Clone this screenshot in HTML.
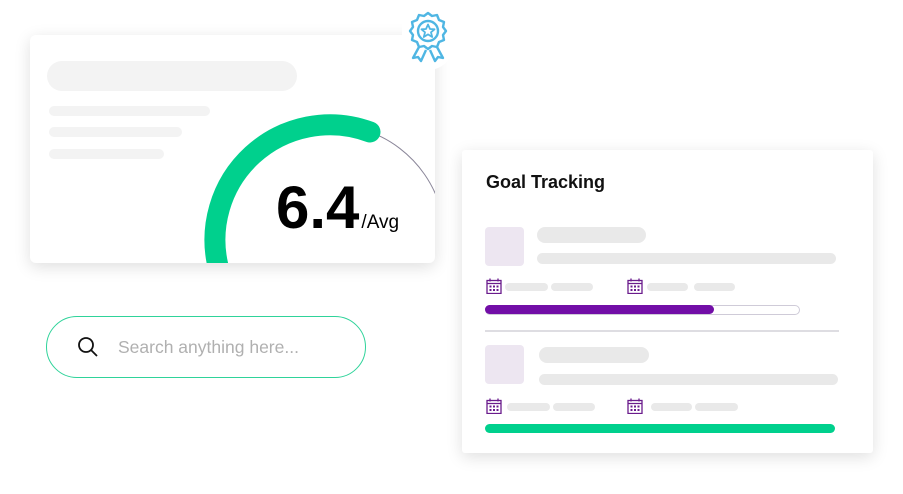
<!DOCTYPE html>
<html><head><style>
*{margin:0;padding:0;box-sizing:border-box}
body{width:903px;height:494px;background:#fff;position:relative;overflow:hidden;font-family:"Liberation Sans",sans-serif}
.a{position:absolute}
.card{background:#fff;border-radius:6px;box-shadow:0 4px 16px rgba(0,0,0,0.13)}
.sk{position:absolute;background:#e9e9e9;border-radius:8px}
.sq{position:absolute;background:#ede6f1;border-radius:4px;width:39px;height:39px}
</style></head><body>
<div class="a card" style="left:30px;top:35px;width:405px;height:228px;overflow:hidden">
  <div class="sk" style="left:17px;top:26px;width:250px;height:30px;border-radius:15px;background:#f3f3f3"></div>
  <div class="sk" style="left:19px;top:71px;width:161px;height:10px;background:#f3f3f3"></div>
  <div class="sk" style="left:19px;top:92px;width:133px;height:10px;background:#f3f3f3"></div>
  <div class="sk" style="left:19px;top:114px;width:115px;height:10px;background:#f3f3f3"></div>
  <svg class="a" style="left:-30px;top:-35px" width="480" height="300">
    <path d="M370 132 A115 115 0 0 1 445 240" fill="none" stroke="#8a8699" stroke-width="1"/>
    <path d="M219 270 A115 115 0 0 1 370 132" fill="none" stroke="#00d08d" stroke-width="21" stroke-linecap="round"/>
  </svg>
  <div class="a" style="left:246px;top:138px;font-size:60px;font-weight:bold;color:#000;white-space:nowrap">6.4<span style="font-size:19px;font-weight:normal;margin-left:2px">/Avg</span></div>
</div>
<div class="a" style="left:402px;top:2px;width:52px;height:68px;background:#fff;border-radius:26px"></div>
<svg class="a" style="left:407px;top:10px" width="42" height="54" viewBox="0 0 42 54" fill="none" stroke="#4fb6e3" stroke-width="2.4" stroke-linejoin="round">
  <path d="M21 3 L25 6 L30 5 L32 10 L37 12 L36 17 L39 21 L36 25 L37 30 L32 32 L30 37 L25 36 L21 39 L17 36 L12 37 L10 32 L5 30 L6 25 L3 21 L6 17 L5 12 L10 10 L12 5 L17 6 Z"/>
  <circle cx="21" cy="21" r="10"/>
  <path d="M21 14.5 L23 19 L27.5 19.3 L24 22.3 L25.2 27 L21 24.4 L16.8 27 L18 22.3 L14.5 19.3 L19 19 Z" stroke-width="1.8"/>
  <path d="M12 37 L6 48 L11 47 L14 51 L19 40"/>
  <path d="M30 37 L36 48 L31 47 L28 51 L23 40"/>
</svg>
<div class="a" style="left:46px;top:316px;width:320px;height:62px;border:1.5px solid #2fd39a;border-radius:31px"></div>
<svg class="a" style="left:76px;top:335px" width="24" height="24" fill="none" stroke="#111" stroke-width="1.8"><circle cx="10" cy="10" r="7"/><path d="M15 15 L21 21"/></svg>
<div class="a" style="left:118px;top:337px;font-size:17.5px;color:#b0b0b0">Search anything here...</div>
<div class="a card" style="left:462px;top:150px;width:411px;height:303px;border-radius:3px">
  <div class="a" style="left:24px;top:22px;font-size:18px;font-weight:bold;color:#111">Goal Tracking</div>
  <div class="sq" style="left:23px;top:77px"></div>
  <div class="sk" style="left:75px;top:77px;width:109px;height:16px"></div>
  <div class="sk" style="left:75px;top:103px;width:299px;height:11px"></div>
  <div class="sk" style="left:43px;top:133px;width:43px;height:8px"></div>
  <div class="sk" style="left:89px;top:133px;width:42px;height:8px"></div>
  <div class="sk" style="left:185px;top:133px;width:41px;height:8px"></div>
  <div class="sk" style="left:232px;top:133px;width:41px;height:8px"></div>
  <div class="a" style="left:23px;top:155px;width:315px;height:10px;border:1px solid #cfcbd8;border-radius:5px"></div>
  <div class="a" style="left:23px;top:155px;width:229px;height:9px;background:#720ea7;border-radius:5px"></div>
  <div class="a" style="left:23px;top:180px;width:354px;height:2px;background:#dedde2"></div>
  <div class="sq" style="left:23px;top:195px"></div>
  <div class="sk" style="left:77px;top:197px;width:110px;height:16px"></div>
  <div class="sk" style="left:77px;top:224px;width:299px;height:11px"></div>
  <div class="sk" style="left:45px;top:253px;width:43px;height:8px"></div>
  <div class="sk" style="left:91px;top:253px;width:42px;height:8px"></div>
  <div class="sk" style="left:189px;top:253px;width:41px;height:8px"></div>
  <div class="sk" style="left:233px;top:253px;width:43px;height:8px"></div>
  <div class="a" style="left:23px;top:274px;width:350px;height:9px;background:#00d08d;border-radius:5px"></div>
</div>
<svg width="0" height="0" style="position:absolute"><defs><g id="cal" fill="none" stroke="#6a1b8c" stroke-width="1.3"><rect x="1" y="2.5" width="14" height="13"/><path d="M4 0.5V3.5M12 0.5V3.5M1 5.5H15"/><g fill="#6a1b8c" stroke="none"><rect x="3.5" y="7.5" width="2" height="2"/><rect x="7" y="7.5" width="2" height="2"/><rect x="10.5" y="7.5" width="2" height="2"/><rect x="3.5" y="11" width="2" height="2"/><rect x="7" y="11" width="2" height="2"/><rect x="10.5" y="11" width="2" height="2"/></g></g></defs></svg>
<svg class="a" style="left:486px;top:278px" width="16" height="16"><use href="#cal"/></svg>
<svg class="a" style="left:627px;top:278px" width="16" height="16"><use href="#cal"/></svg>
<svg class="a" style="left:486px;top:398px" width="16" height="16"><use href="#cal"/></svg>
<svg class="a" style="left:627px;top:398px" width="16" height="16"><use href="#cal"/></svg>
</body></html>
